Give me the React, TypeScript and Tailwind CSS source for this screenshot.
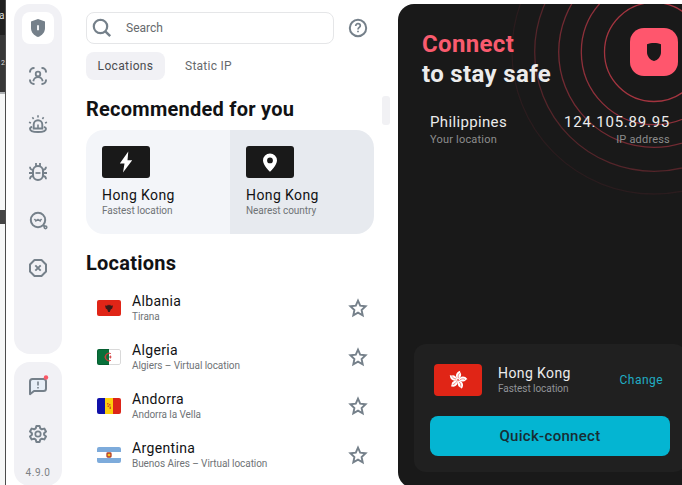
import React, { ReactNode } from "react";

type IconProps = { children: ReactNode };

function Icon({ children }: IconProps) {
  return (
    <svg
      width="24"
      height="24"
      viewBox="0 0 24 24"
      fill="none"
      stroke="currentColor"
      strokeWidth="2"
      className="shrink-0 text-[#75808a]"
    >
      {children}
    </svg>
  );
}

function NavItem({ children, active }: { children: ReactNode; active?: boolean }) {
  return (
    <button
      className={`flex size-8 shrink-0 items-center justify-center rounded-lg ${
        active ? "bg-white" : ""
      }`}
    >
      {children}
    </button>
  );
}

function SideBar() {
  return (
    <nav className="flex w-12 shrink-0 flex-col gap-2 pt-1">
      <div className="flex h-[350px] shrink-0 flex-col items-center gap-4 rounded-2xl bg-[#f1f1f5] py-2">
        <NavItem active>
          <Icon>
            <path
              d="M12 3l7 2.600V12c0 4.400-3 7.600-7 9-4-1.400-7-4.600-7-9V5.600z"
              fill="currentColor"
              stroke="none"
            />
            <path d="M12 9.200v5" stroke="#eef0f3" strokeWidth="2" />
          </Icon>
        </NavItem>
        <NavItem>
          <Icon>
            <path d="M4 8.500V8a4 4 0 0 1 4-4h.5M15.500 4h.5a4 4 0 0 1 4 4v.5M20 15.500v.5a4 4 0 0 1-4 4h-.5M8.500 20H8a4 4 0 0 1-4-4v-.5" />
            <circle cx="12" cy="10" r="2.300" strokeWidth="1.800" />
            <path d="M7.300 17.200c.6-2.700 2.300-4 4.700-4s4.100 1.300 4.700 4" strokeWidth="1.800" />
          </Icon>
        </NavItem>
        <NavItem>
          <Icon>
            <path d="M7.700 16.500v-4a4.300 4.300 0 0 1 8.600 0v4z" strokeWidth="1.900" />
            <path d="M6.200 15c-1.600.3-2.200.9-2.200 1.700C4 18.700 7.500 20 12 20s8-1.300 8-3.300c0-.8-.6-1.400-2.200-1.700" strokeWidth="1.900" />
            <path d="M12 12.500v4" strokeWidth="1.600" />
            <path d="M12 3.300v2.200M6.400 5.300l1.200 1.600M17.600 5.300l-1.200 1.600M3 10.300l2 .7M21 10.300l-2 .7" strokeWidth="1.600" />
          </Icon>
        </NavItem>
        <NavItem>
          <Icon>
            <rect x="7" y="6" width="10" height="14" rx="5" />
            <path d="M10 3v3.500M14 3v3.500M7.500 10C5 10 4 9 4 6.800M16.500 10c2.500 0 3.500-1 3.500-3.200M3 13h4M17 13h4M7.500 16C5 16 4 17 4 19.200M16.500 16c2.500 0 3.500 1 3.500 3.200" strokeWidth="1.800" />
            <path d="M9.500 13h5" strokeWidth="1.700" />
          </Icon>
        </NavItem>
        <NavItem>
          <Icon>
            <circle cx="12" cy="12" r="7.200" />
            <circle cx="19.500" cy="19.300" r="1.300" strokeWidth="1.600" />
            <path d="M17 17l1.700 1.500" />
            <path d="M8.500 10.800c.3 1.600 2.200 1.900 3.500.6 1.300 1.300 3.200 1 3.500-.6M9.800 12.300v1.400M14.200 12.300v1.400M12 11v2" strokeWidth="1.400" />
          </Icon>
        </NavItem>
        <NavItem>
          <Icon>
            <path d="M8.500 4h7L20 8.500v7L15.500 20h-7L4 15.500v-7z" strokeLinejoin="round" />
            <path d="M9.300 9.300l5.400 5.400M14.700 9.300l-5.400 5.400" strokeWidth="1.900" />
          </Icon>
        </NavItem>
      </div>
      <div className="flex h-[124px] shrink-0 flex-col items-center gap-4 rounded-2xl bg-[#f1f1f5] py-2">
        <NavItem>
          <Icon>
            <path d="M4 20.200V7.500A2.500 2.500 0 0 1 6.500 5h11A2.500 2.500 0 0 1 20 7.500v7a2.500 2.500 0 0 1-2.500 2.500H8z" fill="#e6eef7" strokeLinejoin="round" />
            <path d="M12 7.500v4M12 13v1.600" strokeWidth="1.600" />
            <circle cx="20" cy="3.500" r="2.200" fill="#fa5766" stroke="none" />
          </Icon>
        </NavItem>
        <NavItem>
          <Icon>
            <path
              d="M10.400 3.900h3.200l.7 2.500 1.500.9 2.500-.7 1.700 2.900-1.900 1.800v1.400l1.900 1.800-1.700 2.900-2.500-.7-1.500.9-.7 2.500h-3.200l-.7-2.500-1.500-.9-2.500.7L4 14.500l1.900-1.800v-1.400L4 9.500l1.700-2.900 2.500.7 1.500-.9z"
              strokeLinejoin="round"
            />
            <circle cx="12" cy="12" r="2.700" strokeWidth="1.700" />
          </Icon>
        </NavItem>
        <span className="-mt-1 text-[10px] leading-[22px] tracking-[0.6px] text-[#7c8084]">4.9.0</span>
      </div>
    </nav>
  );
}

function HongKongFlag() {
  return (
    <svg width="48" height="32" viewBox="0 0 48 32" className="shrink-0 overflow-hidden rounded">
      <rect width="48" height="32" fill="#e02516" />
      {[0, 72, 144, 216, 288].map((angle) => (
        <g key={angle} transform={`rotate(${angle + 10} 24 16)`}>
          <path d="M24 15.500c-3.300-1.500-4.300-6.500.5-9-.3 1.800 2.300 2.400 1.700 5-.4 1.700-1.200 2.800-2.200 4z" fill="#fff" />
          <path d="M24 14c-.7-1.800-.7-3.500.4-5" stroke="#e02516" strokeWidth=".5" fill="none" />
        </g>
      ))}
    </svg>
  );
}

function Flag({ code }: { code: string }) {
  return (
    <svg width="24" height="16" viewBox="0 0 24 16" className="shrink-0 overflow-hidden rounded-[2px]">
      {code === "al" && (
        <>
          <rect width="24" height="16" fill="#e02517" />
          <path d="M8 5.500l2.200.3.800-1.300 1 .9 1-.9.800 1.300 2.200-.3-.8 3-1.500 1-.9 2.400h-1.600l-.9-2.400-1.500-1z" fill="#3b1a18" />
        </>
      )}
      {code === "dz" && (
        <>
          <rect width="24" height="16" fill="#fff" />
          <rect width="12" height="16" fill="#08703a" />
          <path d="M14 4.600a4 4 0 1 0 0 6.800 3.700 3.700 0 1 1 0-6.800z" fill="#d43b3d" stroke="#d43b3d" strokeWidth=".5" />
          <path d="M11.500 8l1.200-.6.6-1.400.6 1.400 1.200.6-1.200.6-.6 1.400-.6-1.400z" fill="#d43b3d" />
          <rect x=".5" y=".5" width="23" height="15" rx="1.500" fill="none" stroke="#000" strokeOpacity=".15" />
        </>
      )}
      {code === "ad" && (
        <>
          <rect width="8" height="16" fill="#1010a8" />
          <rect x="8" width="8" height="16" fill="#fcce0c" />
          <rect x="16" width="8" height="16" fill="#dc2418" />
          <path d="M10 5h1.500v1.500H10zM12 6h1.500v1.500H12zM10.500 7.500h1.500V9h-1.500zM12.500 8.500H14V11h-1.500z" fill="#d5501f" />
        </>
      )}
      {code === "ar" && (
        <>
          <rect width="24" height="16" fill="#7dabdb" />
          <rect y="5" width="24" height="6" fill="#fff" />
          <rect x="10" y="6" width="4" height="4" rx=".8" fill="#fcc623" stroke="#b23b28" strokeWidth="1.300" />
        </>
      )}
    </svg>
  );
}

const locations = [
  { code: "al", name: "Albania", city: "Tirana" },
  { code: "dz", name: "Algeria", city: "Algiers – Virtual location" },
  { code: "ad", name: "Andorra", city: "Andorra la Vella" },
  { code: "ar", name: "Argentina", city: "Buenos Aires – Virtual location" },
];

function Locations() {
  return (
    <main className="relative ml-6 w-72 shrink-0 pt-3">
      <div className="flex items-center justify-between pr-1">
        <div className="flex h-8 w-[248px] items-center rounded-lg border border-[#e5e6e8] pl-[3px]">
          <Icon>
            <circle cx="10.500" cy="10.500" r="6.700" strokeWidth="2.200" />
            <path d="M15.300 15.300l4.900 4.900" strokeWidth="2.400" />
          </Icon>
          <input
            type="text"
            placeholder="Search"
            className="ml-3 w-40 text-[12px] outline-none placeholder:text-[#66696c]"
          />
        </div>
        <Icon>
          <circle cx="12" cy="12" r="8.200" />
          <path d="M9.700 10c0-1.500 1-2.300 2.300-2.300s2.300.8 2.300 2.100c0 1.600-2.300 1.800-2.300 3.700M12 14.800v1.500" strokeWidth="1.700" />
        </Icon>
      </div>
      <div className="mt-2 flex h-7 items-center text-[12px] text-[#66696c]">
        <button className="h-7 w-[79px] rounded-lg bg-[#f1f1f5] tracking-[0.35px] text-[#4a4c50]">Locations</button>
        <button className="ml-5 tracking-[0.25px]">Static IP</button>
      </div>
      <h2 className="mt-4 text-[20px] leading-[26px] font-bold tracking-[0.25px]">Recommended for you</h2>
      <div className="absolute top-24 -right-4 h-[29px] w-2 rounded-[3px] bg-[#f1f1f4]" />
      <div className="mt-2 grid h-[104px] grid-cols-2 overflow-hidden rounded-[18px]">
        <div className="bg-[#f3f5f9] px-4 pt-4">
          <div className="flex h-8 w-12 items-center justify-center rounded-[3px] bg-[#191919]">
            <svg width="24" height="24" viewBox="0 0 24 24">
              <path d="M14.300 1.500L5.800 13.500h4.700L9 22.500l9.200-12.200h-4.700z" fill="#fff" />
            </svg>
          </div>
          <p className="mt-2 text-[14px] leading-[18px] tracking-[0.4px]">Hong Kong</p>
          <p className="text-[10px] leading-[14px] tracking-[-0.05px] text-[#6f7376]">Fastest location</p>
        </div>
        <div className="bg-[#e7eaef] px-4 pt-4">
          <div className="flex h-8 w-12 items-center justify-center rounded-[3px] bg-[#191919]">
            <svg width="24" height="24" viewBox="0 0 24 24">
              <path d="M12 3.500a7 7 0 0 0-7 7c0 4.700 7 11.300 7 11.300s7-6.600 7-11.300a7 7 0 0 0-7-7zm0 4a2.900 2.900 0 1 1 0 5.800 2.900 2.900 0 0 1 0-5.800z" fill="#fff" />
            </svg>
          </div>
          <p className="mt-2 text-[14px] leading-[18px] tracking-[0.4px]">Hong Kong</p>
          <p className="text-[10px] leading-[14px] tracking-[-0.05px] text-[#6f7376]">Nearest country</p>
        </div>
      </div>
      <h2 className="mt-4 text-[20px] leading-[26px] font-bold tracking-[0.25px]">Locations</h2>
      <ul className="mt-[7px]">
        {locations.map((l) => (
          <li key={l.code} className="flex h-[49px] items-center pr-1 pl-[11px]">
            <Flag code={l.code} />
            <div className="ml-[11px] grow">
              <p className="text-[14px] leading-[18px] tracking-[0.35px]">{l.name}</p>
              <p className="text-[10px] leading-[14px] tracking-[-0.07px] text-[#6f7376]">{l.city}</p>
            </div>
            <Icon>
              <path d="M12 4.700l2.200 5 5.400.6-4 3.700 1.100 5.300L12 16.600l-4.700 2.700L8.400 14l-4-3.700 5.400-.6z" strokeWidth="1.900" />
            </Icon>
          </li>
        ))}
      </ul>
    </main>
  );
}

const rings = [
  { r: 49.5, opacity: 0.65 },
  { r: 72.7, opacity: 0.55 },
  { r: 95.3, opacity: 0.42 },
  { r: 119.3, opacity: 0.28 },
  { r: 142, opacity: 0.08 },
];

function ConnectPanel() {
  return (
    <section className="relative mt-1 ml-6 flex h-[484px] w-[300px] shrink-0 flex-col overflow-hidden rounded-2xl bg-[#191919] text-[#ececec]">
      <svg width="300" height="220" className="absolute top-0 left-0" fill="none">
        {rings.map((ring) => (
          <circle key={ring.r} cx="256" cy="48" r={ring.r} stroke="#ee4355" strokeOpacity={ring.opacity} strokeWidth="1.300" />
        ))}
      </svg>
      <div className="relative flex pt-6 pl-6">
        <h1 className="w-52 shrink-0 pt-px text-[24px] leading-[30px] font-bold tracking-[0.35px]">
          <span className="block text-[#f95b6e]">Connect</span>
          to stay safe
        </h1>
        <div className="flex size-12 shrink-0 items-center justify-center rounded-[14px] bg-[#ff566d]">
          <svg width="24" height="24" viewBox="0 0 24 24">
            <path d="M12 3c2.500 0 5 .4 7 1.200V12c0 4.500-3.200 8.200-7 9-3.800-.8-7-4.500-7-9V4.200C7 3.400 9.500 3 12 3z" fill="#191919" />
          </svg>
        </div>
      </div>
      <div className="relative mt-[23px] flex w-[272px] justify-between pl-8">
        <div>
          <p className="text-[15px] leading-5 tracking-[0.35px]">Philippines</p>
          <p className="text-[11px] leading-4 tracking-[0.2px] text-[#8d8d8d]">Your location</p>
        </div>
        <div className="text-right">
          <p className="text-[15px] leading-5 tracking-[0.75px]">124.105.89.95</p>
          <p className="text-[11px] leading-4 tracking-[0.2px] text-[#8d8d8d]">IP address</p>
        </div>
      </div>
      <div className="mt-auto mb-4 ml-4 h-32 w-[272px] rounded-xl bg-[#202020] px-4 pt-5">
        <div className="flex h-8 items-center pr-[7px] pl-1">
          <HongKongFlag />
          <div className="ml-4 grow">
            <p className="text-[14px] leading-[18px] tracking-[0.4px]">Hong Kong</p>
            <p className="text-[10px] leading-[14px] tracking-[-0.05px] text-[#909397]">Fastest location</p>
          </div>
          <button className="text-[12px] tracking-[0.45px] text-[#20adc4]">Change</button>
        </div>
        <button className="mt-5 h-10 w-60 rounded-lg bg-[#04b5d2] text-[15px] font-medium tracking-[0.3px] text-[#182d34]">
          Quick-connect
        </button>
      </div>
    </section>
  );
}

function App() {
  return (
    <div className="flex h-[485px] w-[682px] overflow-hidden bg-white font-['Roboto',sans-serif] text-[#111214]">
      {/* edge of the window behind */}
      <div className="mr-2 flex w-1.5 shrink-0 flex-col border-r border-[#4c4c4c] bg-[#f6f7f7] leading-4 text-[#ddd]">
        <div className="h-[35px] shrink-0 bg-[#202020] pt-2 text-[10px]">
          <span className="-ml-px">a</span>
        </div>
        <div className="flex h-[57px] shrink-0 justify-end bg-[#373737] pt-5 text-[7px]">
          <span>2</span>
        </div>
        <div className="h-0.5 shrink-0 bg-[#aeb1b3]" />
        <div className="mt-[116px] h-3.5 shrink-0 bg-[#444]" />
      </div>
      <SideBar />
      <Locations />
      <ConnectPanel />
    </div>
  );
}

export default App;
